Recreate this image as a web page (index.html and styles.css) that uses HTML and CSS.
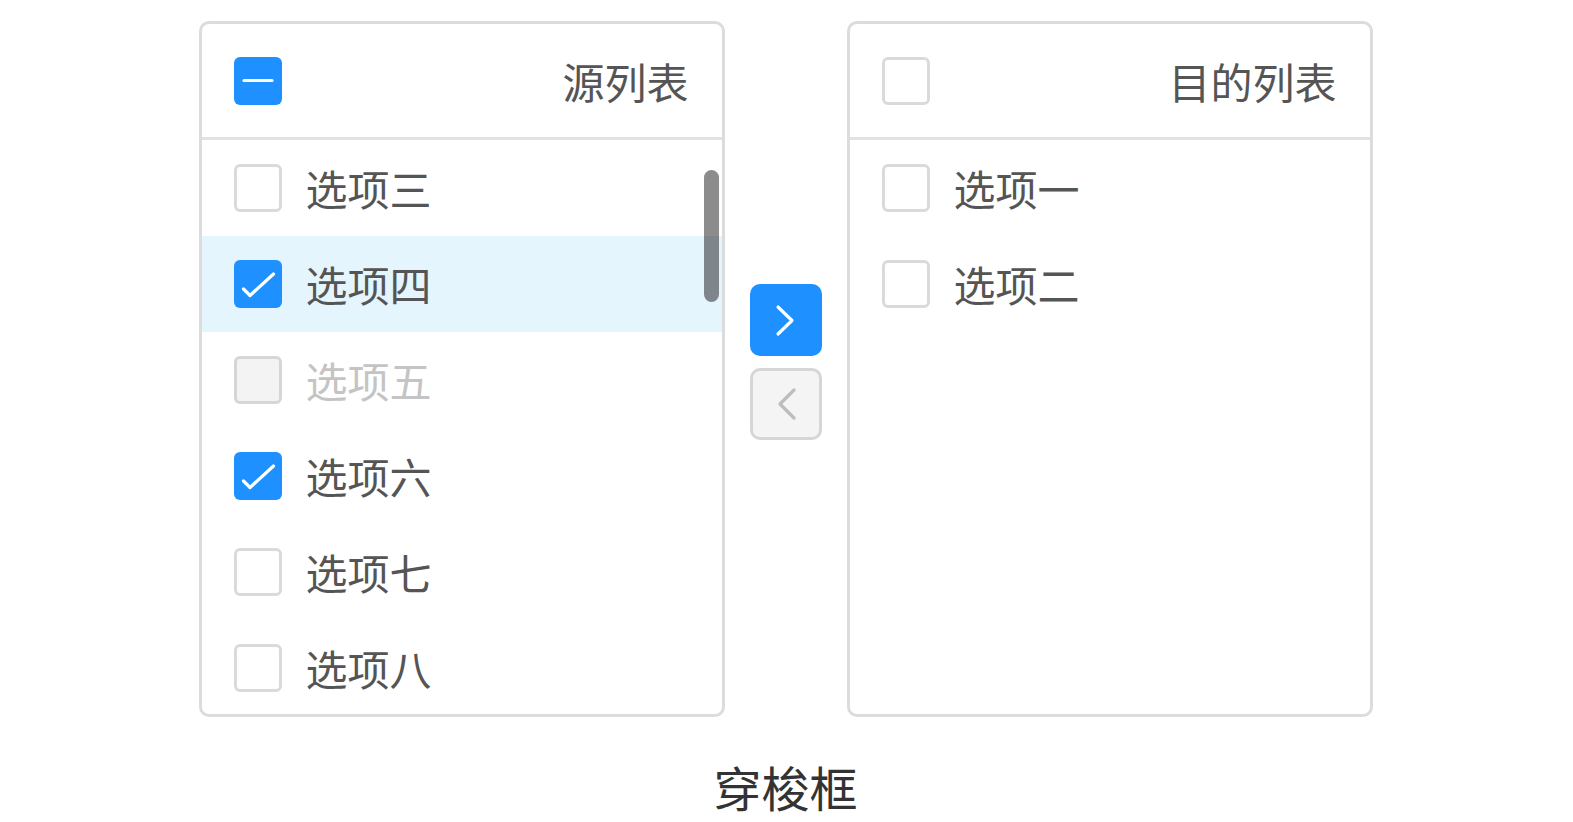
FILE: index.html
```html
<!DOCTYPE html>
<html lang="zh-CN">
<head>
<meta charset="utf-8">
<title>穿梭框</title>
<link rel="stylesheet" href="styles.css">
</head>
<body>
<div class="page">
  <div class="transfer">
    <div class="panel">
      <div class="panel-header">
        <span class="checkbox checkbox--on">
          <svg viewBox="0 0 48 48" width="48" height="48"><path d="M10 23.5 H38" stroke="#fff" stroke-width="3.2" stroke-linecap="round" fill="none"/></svg>
        </span>
        <span class="panel-title">源列表</span>
      </div>
      <div class="panel-body">
        <div class="item"><span class="checkbox"></span><span class="label">选项三</span></div>
        <div class="item item--active"><span class="checkbox checkbox--on"><svg viewBox="0 0 48 48" width="48" height="48"><path d="M9.5 29 L16 35.5 L39.5 14" stroke="#fff" stroke-width="3.2" stroke-linecap="round" stroke-linejoin="round" fill="none"/></svg></span><span class="label">选项四</span></div>
        <div class="item item--disabled"><span class="checkbox checkbox--disabled"></span><span class="label">选项五</span></div>
        <div class="item"><span class="checkbox checkbox--on"><svg viewBox="0 0 48 48" width="48" height="48"><path d="M9.5 29 L16 35.5 L39.5 14" stroke="#fff" stroke-width="3.2" stroke-linecap="round" stroke-linejoin="round" fill="none"/></svg></span><span class="label">选项六</span></div>
        <div class="item"><span class="checkbox"></span><span class="label">选项七</span></div>
        <div class="item"><span class="checkbox"></span><span class="label">选项八</span></div>
        <div class="scrollbar"></div>
      </div>
    </div>

    <div class="actions">
      <button class="btn btn--primary" type="button">
        <svg viewBox="0 0 72 72" width="72" height="72"><path d="M28 23 L42 36.5 L28 50" stroke="#fff" stroke-width="3.2" stroke-linecap="round" stroke-linejoin="round" fill="none"/></svg>
      </button>
      <button class="btn btn--disabled" type="button">
        <svg viewBox="0 0 66 66" width="66" height="66"><path d="M41 19 L27 33 L41 47" stroke="#bdbdbd" stroke-width="3.2" stroke-linecap="round" stroke-linejoin="round" fill="none"/></svg>
      </button>
    </div>

    <div class="panel">
      <div class="panel-header">
        <span class="checkbox"></span>
        <span class="panel-title">目的列表</span>
      </div>
      <div class="panel-body">
        <div class="item"><span class="checkbox"></span><span class="label">选项一</span></div>
        <div class="item"><span class="checkbox"></span><span class="label">选项二</span></div>
      </div>
    </div>
  </div>
  <div class="caption">穿梭框</div>
</div>
</body>
</html>
```

FILE: styles.css
```css
* { box-sizing: border-box; }

html, body {
  margin: 0;
  padding: 0;
  background: #fff;
}

body {
  font-family: "Noto Sans CJK SC", "Noto Sans", sans-serif;
  color: #555;
}

.page {
  display: flex;
  flex-direction: column;
  align-items: center;
  padding-top: 21px;
  padding-right: 2px;
}

.transfer {
  display: flex;
  align-items: center;
  gap: 25px;
}

.panel {
  width: 526px;
  height: 696px;
  border: 3px solid #dcdcdc;
  border-radius: 10px;
  overflow: hidden;
  display: flex;
  flex-direction: column;
  background: #fff;
}

.panel-header {
  height: 116px;
  flex: none;
  border-bottom: 3px solid #e2e2e2;
  display: flex;
  align-items: center;
  justify-content: space-between;
  padding: 0 33px 0 32px;
}

.panel-title {
  font-size: 42px;
  line-height: 1;
  color: #555;
}

.panel-body {
  position: relative;
  flex: 1;
  overflow: hidden;
}

.item {
  height: 96px;
  display: flex;
  align-items: center;
  gap: 24px;
  padding-left: 32px;
}

.item--active {
  background: #e5f5fe;
}

.label {
  font-size: 42px;
  line-height: 1;
  color: #555;
}

.item--disabled .label {
  color: #c4c4c4;
}

.checkbox {
  width: 48px;
  height: 48px;
  flex: none;
  border: 3px solid #dadada;
  border-radius: 6px;
  background: #fff;
  display: flex;
  align-items: center;
  justify-content: center;
  overflow: hidden;
}

.checkbox svg {
  display: block;
  flex: none;
}

.checkbox--on {
  border: none;
  background: #1e90ff;
}

.checkbox--disabled {
  background: #f3f3f3;
  border-color: #d6d6d6;
}

.scrollbar {
  position: absolute;
  top: 30px;
  right: 3px;
  width: 15px;
  height: 132px;
  border-radius: 8px;
  background: rgba(0, 0, 0, 0.45);
}

.actions {
  display: flex;
  flex-direction: column;
  gap: 12px;
  margin-bottom: 14px;
}

.btn {
  width: 72px;
  height: 72px;
  padding: 0;
  margin: 0;
  border-radius: 10px;
  display: flex;
  align-items: center;
  justify-content: center;
  cursor: pointer;
}

.btn svg { display: block; }

.btn--primary {
  background: #1e90ff;
  border: none;
}

.btn--disabled {
  background: #f4f4f4;
  border: 3px solid #d6d6d6;
}

.caption {
  margin-top: 36px;
  font-size: 48px;
  line-height: 66px;
  color: #333;
}
```
